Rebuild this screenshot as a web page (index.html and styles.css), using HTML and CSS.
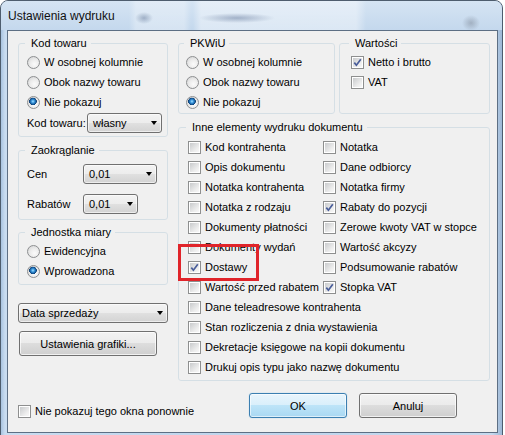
FILE: index.html
```html
<!DOCTYPE html>
<html lang="pl">
<head>
  <meta charset="UTF-8">
  <title>Ustawienia wydruku</title>
  <link rel="stylesheet" href="styles.css">
</head>
<body>
  <div class="window">
    <div class="titlebar"><span class="title">Ustawienia wydruku</span></div>

    <div class="client">
      <div class="layout">
        <div class="left-col">
          <fieldset class="group kod">
            <legend>Kod towaru</legend>
            <label class="opt"><span class="radio"></span>W osobnej kolumnie</label>
            <label class="opt"><span class="radio"></span>Obok nazwy towaru</label>
            <label class="opt"><span class="radio on"></span>Nie pokazuj</label>
            <div class="field-row">
              <span class="field-label wide">Kod towaru:</span>
              <div class="combo combo-kod"><span>własny</span><i class="arrow"></i></div>
            </div>
          </fieldset>

          <fieldset class="group zaokr">
            <legend>Zaokrąglanie</legend>
            <div class="field-row">
              <span class="field-label">Cen</span>
              <div class="combo combo-cen"><span>0,01</span><i class="arrow"></i></div>
            </div>
            <div class="field-row">
              <span class="field-label">Rabatów</span>
              <div class="combo combo-rabat"><span>0,01</span><i class="arrow"></i></div>
            </div>
          </fieldset>

          <fieldset class="group jedn">
            <legend>Jednostka miary</legend>
            <label class="opt"><span class="radio"></span>Ewidencyjna</label>
            <label class="opt"><span class="radio on"></span>Wprowadzona</label>
          </fieldset>

          <div class="combo combo-data"><span>Data sprzedaży</span><i class="arrow"></i></div>
          <button class="btn btn-grafika">Ustawienia grafiki...</button>
        </div>

        <div class="right-col">
          <div class="top-row">
            <fieldset class="group pkwiu">
              <legend>PKWiU</legend>
              <label class="opt"><span class="radio"></span>W osobnej kolumnie</label>
              <label class="opt"><span class="radio"></span>Obok nazwy towaru</label>
              <label class="opt"><span class="radio on"></span>Nie pokazuj</label>
            </fieldset>
            <fieldset class="group wartosci">
              <legend>Wartości</legend>
              <label class="opt"><span class="check on"><svg viewBox="0 0 9 9"><path d="M1.3 4.6 L3.4 7.2 L7.8 1.2"/></svg></span>Netto i brutto</label>
              <label class="opt"><span class="check"></span>VAT</label>
            </fieldset>
          </div>

          <fieldset class="group inne">
            <legend>Inne elementy wydruku dokumentu</legend>
            <div class="check-grid">
              <label class="opt"><span class="check"></span>Kod kontrahenta</label>
              <label class="opt"><span class="check"></span>Notatka</label>
              <label class="opt"><span class="check"></span>Opis dokumentu</label>
              <label class="opt"><span class="check"></span>Dane odbiorcy</label>
              <label class="opt"><span class="check"></span>Notatka kontrahenta</label>
              <label class="opt"><span class="check"></span>Notatka firmy</label>
              <label class="opt"><span class="check"></span>Notatka z rodzaju</label>
              <label class="opt"><span class="check on"><svg viewBox="0 0 9 9"><path d="M1.3 4.6 L3.4 7.2 L7.8 1.2"/></svg></span>Rabaty do pozycji</label>
              <label class="opt"><span class="check"></span>Dokumenty płatności</label>
              <label class="opt"><span class="check"></span>Zerowe kwoty VAT w stopce</label>
              <label class="opt"><span class="check"></span>Dokumenty wydań</label>
              <label class="opt"><span class="check"></span>Wartość akcyzy</label>
              <label class="opt"><span class="check on"><svg viewBox="0 0 9 9"><path d="M1.3 4.6 L3.4 7.2 L7.8 1.2"/></svg></span>Dostawy</label>
              <label class="opt"><span class="check"></span>Podsumowanie rabatów</label>
              <label class="opt"><span class="check"></span>Wartość przed rabatem</label>
              <label class="opt"><span class="check on"><svg viewBox="0 0 9 9"><path d="M1.3 4.6 L3.4 7.2 L7.8 1.2"/></svg></span>Stopka VAT</label>
              <label class="opt span"><span class="check"></span>Dane teleadresowe kontrahenta</label>
              <label class="opt span"><span class="check"></span>Stan rozliczenia z dnia wystawienia</label>
              <label class="opt span"><span class="check"></span>Dekretacje księgowe na kopii dokumentu</label>
              <label class="opt span"><span class="check"></span>Drukuj opis typu jako nazwę dokumentu</label>
              <div class="highlight"></div>
            </div>
          </fieldset>
        </div>
      </div>

      <div class="footer">
        <label class="opt"><span class="check"></span>Nie pokazuj tego okna ponownie</label>
        <div class="actions">
          <button class="btn btn-default">OK</button>
          <button class="btn">Anuluj</button>
        </div>
      </div>
    </div>
  </div>
</body>
</html>
```

FILE: styles.css
```css
* {
  box-sizing: border-box;
}

body {
  margin: 0;
  background: #fff;
  font: 11px "Liberation Sans", Arial, sans-serif;
  color: #000;
}

.window {
  width: 503px;
  height: 437px;
  border: 1px solid #4e5d6e;
  border-radius: 8px 8px 0 0;
  overflow: hidden;
  background: linear-gradient(to right, #a8c3e0, #c9dcf0 4px, #bfd5ec 50%, #c6daef 98%, #9db8d6);
}

/* title bar with the blurred glass behind it */
.titlebar {
  height: 29px;
  padding: 8px 0 0 7px;
  background:
    radial-gradient(ellipse 9px 6px at 143px 17px, rgba(110, 130, 160, 0.55), transparent),
    radial-gradient(ellipse 38px 5px at 236px 17px, rgba(100, 120, 155, 0.5), transparent),
    radial-gradient(ellipse 9px 8px at 470px 22px, rgba(115, 125, 140, 0.45), transparent),
    linear-gradient(to right, transparent 128px, rgba(255, 255, 255, 0.3) 135px, rgba(255, 255, 255, 0.3) 183px, transparent 190px),
    linear-gradient(to right, transparent 192px, rgba(255, 255, 255, 0.4) 200px, rgba(255, 255, 255, 0.4) 355px, transparent 365px),
    linear-gradient(#d5e4f3, #c4d8ed);
}

.title {
  font-size: 12px;
  color: #111;
}

.client {
  width: 491px;
  height: 403px;
  margin-left: 6px;
  border: 1px solid #5d6f84;
  background: #f0f0f0;
  padding-top: 5px;
}

.layout {
  display: grid;
  grid-template-columns: 150px 1fr;
  column-gap: 10px;
  padding: 0 7px 0 10px;
  align-items: start;
}

.left-col {
  display: flex;
  flex-direction: column;
}

.right-col {
  display: flex;
  flex-direction: column;
}

.top-row {
  display: grid;
  grid-template-columns: 157px 1fr;
  column-gap: 4px;
}

/* group boxes */
.group {
  margin: 0;
  min-width: 0;
  border: 1px solid #d5dfe5;
  border-radius: 3px;
}

.group legend {
  line-height: 14px;
  padding: 0 4px 0 6px;
  margin-left: -2px;
}

.kod {
  padding: 2px 5px 3px 8px;
}

.zaokr {
  margin-top: 6px;
  padding: 7px 5px 5px 8px;
  display: flex;
  flex-direction: column;
  gap: 10px;
}

.jedn {
  margin-top: 5px;
  padding: 2px 5px 3px 8px;
}

.pkwiu {
  padding: 2px 5px 1px 7px;
}

.wartosci {
  padding: 2px 5px 1px 11px;
}

.inne {
  margin-top: 6px;
  padding: 3px 5px 3px 9px;
}

.opt {
  display: flex;
  align-items: center;
  gap: 4px;
  height: 20px;
  white-space: nowrap;
}

.check-grid {
  position: relative;
  display: grid;
  grid-template-columns: 135px 1fr;
}

.check-grid .span {
  grid-column: 1 / -1;
}

.highlight {
  position: absolute;
  left: -10px;
  top: 107px;
  width: 81px;
  height: 37px;
  border: 3px solid #e0242a;
}

/* radio buttons */
.radio {
  flex: none;
  width: 13px;
  height: 13px;
  border-radius: 50%;
  border: 1px solid #8d8f91;
  background: radial-gradient(circle at 60% 65%, #fbfbfb 0, #ececec 45%, #cfcfcf 100%);
}

.radio.on {
  background:
    radial-gradient(circle at 45% 40%, #a8e2ff 0, #3d9be0 1.5px, #15599a 3px, #0e3f73 3.6px, transparent 4px),
    radial-gradient(circle at 60% 65%, #fbfbfb 0, #ececec 45%, #cfcfcf 100%);
}

/* check boxes */
.check {
  flex: none;
  width: 13px;
  height: 13px;
  border: 1px solid #8e8f8f;
  padding: 1px;
  background:
    linear-gradient(135deg, #c9cbcd, #eeeeee 70%, #f8f8f8) content-box,
    linear-gradient(#fff, #fff) padding-box;
}

.check svg {
  display: block;
  width: 9px;
  height: 9px;
}

.check path {
  fill: none;
  stroke: #4a5e9a;
  stroke-width: 1.7;
}

/* combo boxes */
.field-row {
  display: flex;
  align-items: center;
  height: 20px;
}

.kod .field-row {
  height: 21px;
}

.field-label {
  width: 56px;
}

.field-label.wide {
  width: 60px;
}

.combo {
  display: flex;
  align-items: center;
  justify-content: space-between;
  height: 20px;
  padding: 0 4px 0 5px;
  border: 1px solid #707070;
  border-radius: 3px;
  background: linear-gradient(#f3f3f3, #ececec 50%, #e0e0e0 51%, #d3d3d3);
  box-shadow: inset 0 0 0 1px rgba(255, 255, 255, 0.6);
}

.combo-kod {
  width: 75px;
}

.combo-cen {
  width: 74px;
}

.combo-rabat {
  width: 55px;
}

.combo-data {
  margin-top: 18px;
  padding-left: 3px;
}

.arrow {
  width: 0;
  height: 0;
  border-left: 3.5px solid transparent;
  border-right: 3.5px solid transparent;
  border-top: 4px solid #000;
}

/* buttons */
.btn {
  height: 25px;
  font: inherit;
  color: #000;
  border: 1px solid #707070;
  border-radius: 3px;
  background: linear-gradient(#f2f2f2, #ebebeb 49%, #dddddd 50%, #cfcfcf);
  box-shadow: inset 0 0 0 1px rgba(255, 255, 255, 0.7);
  padding: 0;
}

.btn-grafika {
  margin: 8px 0 0 1px;
  width: 138px;
}

.btn-default {
  border-color: #3c7fb1;
  background: linear-gradient(#e9f5fc, #d9effb 49%, #bde4f8 50%, #a9d8f2);
  box-shadow: inset 0 0 0 1px rgba(255, 255, 255, 0.6), 0 0 1px #7fc4ea;
}

.footer {
  display: flex;
  align-items: flex-end;
  margin-top: 12px;
  padding-left: 10px;
}

.footer .opt {
  height: 14px;
  margin-bottom: 0;
}

.actions {
  display: flex;
  gap: 12px;
  margin-left: auto;
  margin-right: 40px;
}

.actions .btn {
  width: 98px;
}
```
